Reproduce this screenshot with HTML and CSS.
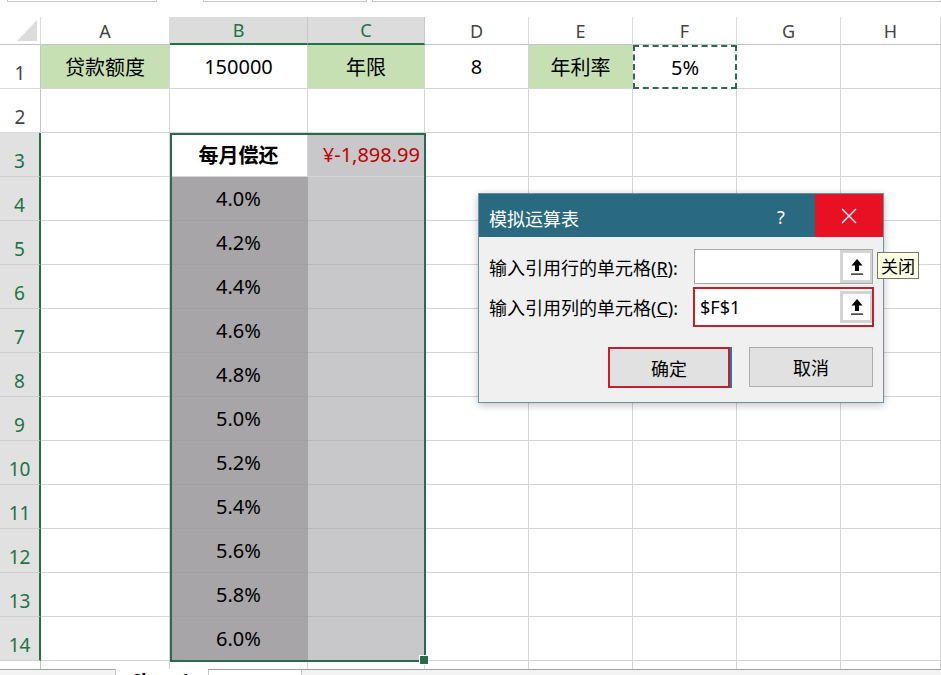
FILE: index.html
```html
<!DOCTYPE html>
<html lang="zh-CN">
<head>
    <meta charset="UTF-8">
    <title>模拟运算表</title>
    <link rel="stylesheet" href="styles.css">
</head>
<body>
<div class="page">
    <div class="topbar">
        <div class="fbox name"></div>
        <div class="fbox fx"></div>
        <div class="fbox formula"></div>
    </div>

    <div class="sheet">
        <!-- column headers -->
        <div class="ch corner"></div>
        <div class="ch">A</div>
        <div class="ch sel">B</div>
        <div class="ch sel">C</div>
        <div class="ch">D</div>
        <div class="ch">E</div>
        <div class="ch">F</div>
        <div class="ch">G</div>
        <div class="ch">H</div>

        <!-- row 1 -->
        <div class="rh">1</div>
        <div class="c fill">贷款额度</div>
        <div class="c">150000</div>
        <div class="c fill">年限</div>
        <div class="c">8</div>
        <div class="c fill">年利率</div>
        <div class="c ants">5%</div>
        <div class="c"></div>
        <div class="c"></div>

        <!-- row 2 -->
        <div class="rh">2</div>
        <div class="c"></div><div class="c"></div><div class="c"></div><div class="c"></div>
        <div class="c"></div><div class="c"></div><div class="c"></div><div class="c"></div>

        <!-- row 3 -->
        <div class="rh sel">3</div>
        <div class="c"></div>
        <div class="c head">每月偿还</div>
        <div class="c neg">¥-1,898.99</div>
        <div class="c"></div><div class="c"></div><div class="c"></div><div class="c"></div><div class="c"></div>

        <div class="rh sel">4</div>
        <div class="c"></div><div class="c pct">4.0%</div><div class="c shade"></div>
        <div class="c"></div><div class="c"></div><div class="c"></div><div class="c"></div><div class="c"></div>

        <div class="rh sel">5</div>
        <div class="c"></div><div class="c pct">4.2%</div><div class="c shade"></div>
        <div class="c"></div><div class="c"></div><div class="c"></div><div class="c"></div><div class="c"></div>

        <div class="rh sel">6</div>
        <div class="c"></div><div class="c pct">4.4%</div><div class="c shade"></div>
        <div class="c"></div><div class="c"></div><div class="c"></div><div class="c"></div><div class="c"></div>

        <div class="rh sel">7</div>
        <div class="c"></div><div class="c pct">4.6%</div><div class="c shade"></div>
        <div class="c"></div><div class="c"></div><div class="c"></div><div class="c"></div><div class="c"></div>

        <div class="rh sel">8</div>
        <div class="c"></div><div class="c pct">4.8%</div><div class="c shade"></div>
        <div class="c"></div><div class="c"></div><div class="c"></div><div class="c"></div><div class="c"></div>

        <div class="rh sel">9</div>
        <div class="c"></div><div class="c pct">5.0%</div><div class="c shade"></div>
        <div class="c"></div><div class="c"></div><div class="c"></div><div class="c"></div><div class="c"></div>

        <div class="rh sel">10</div>
        <div class="c"></div><div class="c pct">5.2%</div><div class="c shade"></div>
        <div class="c"></div><div class="c"></div><div class="c"></div><div class="c"></div><div class="c"></div>

        <div class="rh sel">11</div>
        <div class="c"></div><div class="c pct">5.4%</div><div class="c shade"></div>
        <div class="c"></div><div class="c"></div><div class="c"></div><div class="c"></div><div class="c"></div>

        <div class="rh sel">12</div>
        <div class="c"></div><div class="c pct">5.6%</div><div class="c shade"></div>
        <div class="c"></div><div class="c"></div><div class="c"></div><div class="c"></div><div class="c"></div>

        <div class="rh sel">13</div>
        <div class="c"></div><div class="c pct">5.8%</div><div class="c shade"></div>
        <div class="c"></div><div class="c"></div><div class="c"></div><div class="c"></div><div class="c"></div>

        <div class="rh sel">14</div>
        <div class="c"></div><div class="c pct">6.0%</div><div class="c shade"></div>
        <div class="c"></div><div class="c"></div><div class="c"></div><div class="c"></div><div class="c"></div>

        <!-- row 15, cut off -->
        <div class="rh cut"></div>
        <div class="c cut"></div><div class="c cut"></div><div class="c cut"></div><div class="c cut"></div>
        <div class="c cut"></div><div class="c cut"></div><div class="c cut"></div><div class="c cut"></div>

        <!-- selection B3:C14 -->
        <div class="range"></div>
    </div>

    <div class="tabs">
        <div class="tab-nav"></div>
        <div class="tab active">Sheet1</div>
        <div class="tab">Sheet2</div>
        <div class="tab-rest"></div>
    </div>

    <!-- data table dialog -->
    <div class="dialog">
        <div class="dlg-title">
            <span class="dlg-name">模拟运算表</span>
            <span class="dlg-help">?</span>
            <span class="dlg-close">
                <svg width="16" height="16" viewBox="0 0 16 16">
                    <path d="M1 1 L15 15 M15 1 L1 15" stroke="#fff" stroke-width="1.4" fill="none"/>
                </svg>
            </span>
        </div>
        <div class="dlg-body">
            <div class="dlg-row">
                <span class="dlg-label">输入引用行的单元格(<u>R</u>):</span>
                <div class="field">
                    <span class="field-val"></span>
                    <span class="pick">
                        <svg width="14" height="18" viewBox="0 0 14 18">
                            <path d="M7 1 L1.5 7.5 L5 7.5 L5 13 L9 13 L9 7.5 L12.5 7.5 Z" fill="#000"/>
                            <rect x="1" y="15.5" width="12" height="1.2" fill="#000"/>
                        </svg>
                    </span>
                </div>
            </div>
            <div class="dlg-row row-col">
                <span class="dlg-label">输入引用列的单元格(<u>C</u>):</span>
                <div class="field picked">
                    <span class="field-val">$F$1</span>
                    <span class="pick">
                        <svg width="14" height="18" viewBox="0 0 14 18">
                            <path d="M7 1 L1.5 7.5 L5 7.5 L5 13 L9 13 L9 7.5 L12.5 7.5 Z" fill="#000"/>
                            <rect x="1" y="15.5" width="12" height="1.2" fill="#000"/>
                        </svg>
                    </span>
                </div>
            </div>
            <div class="dlg-buttons">
                <button class="btn primary">确定</button>
                <button class="btn">取消</button>
            </div>
        </div>
    </div>

    <div class="tip">关闭</div>
</div>
</body>
</html>
```

FILE: styles.css
```css
* {
    box-sizing: border-box;
}

body {
    margin: 0;
    background: #fff;
    font-family: "Noto Sans", "Noto Sans CJK SC", sans-serif;
    overflow: hidden;
}

.page {
    position: relative;
    width: 941px;
    height: 675px;
    overflow: hidden;
}

/* formula bar edges peeking at the top */
.topbar {
    height: 17px;
    display: flex;
}

.fbox {
    height: 2px;
    border: 1px solid #c6c6c6;
    border-top: none;
}

.fbox.name { margin-left: 7px; width: 150px; }
.fbox.fx { margin-left: 46px; width: 164px; }
.fbox.formula { margin-left: 5px; flex: 1; }

/* worksheet grid */
.sheet {
    position: relative;
    display: grid;
    grid-template-columns: 41px 129px 138px 117px 104px 104px 104px 104px 1fr;
    grid-template-rows: 28px repeat(14, 44px) 8px;
}

.ch, .rh, .c {
    display: flex;
    align-items: center;
    justify-content: center;
    border-right: 1px solid #d4d4d4;
    border-bottom: 1px solid #d4d4d4;
}

.c {
    font-size: 20px;
    color: #000;
}

.ch {
    font-size: 18px;
    color: #444;
    background: #fff;
    border-right-color: #dadada;
    border-bottom-color: #c4c4c4;
}

.ch.sel {
    background: #dcdcdc;
    color: #217346;
    border-right-color: #c8c8c8;
    border-bottom: 2px solid #217346;
}

.corner {
    position: relative;
}

.corner::after {
    content: "";
    position: absolute;
    left: 17px;
    top: 3px;
    width: 20px;
    height: 21px;
    background: #dcdcdc;
    clip-path: polygon(100% 0, 100% 100%, 0 100%);
}

.rh {
    font-size: 19px;
    color: #444;
    background: #fff;
    align-items: flex-end;
    padding-bottom: 2px;
    border-right-color: #c4c4c4;
    border-bottom-color: #dadada;
}

.rh.sel {
    background: #e1e1e1;
    color: #217346;
    border-right: 2px solid #217346;
    border-bottom-color: #cdcdcd;
}

.rh.cut, .c.cut {
    border-bottom: none;
}

.fill {
    background: #c6e0b4;
}

.ants {
    border: 2px dashed #2b6a4e;
}

.head {
    font-weight: bold;
}

.neg {
    background: #c8c7c9;
    color: #c00000;
    justify-content: flex-end;
    padding-right: 4px;
}

.pct {
    background: #a7a5a7;
    border-right-color: #a7a5a7;
    border-bottom-color: #a2a0a2;
}

.shade {
    background: #c8c7c9;
    border-bottom-color: #b8b7b9;
}

.range {
    position: absolute;
    grid-column: 3 / 5;
    grid-row: 4 / 16;
    top: 0;
    left: 0;
    right: -1px;
    bottom: -1px;
    border: 2px solid #2b6a4e;
    pointer-events: none;
}

.range::after {
    content: "";
    position: absolute;
    right: -5px;
    bottom: -5px;
    width: 8px;
    height: 8px;
    background: #2b6a4e;
    border: 1px solid #fff;
}

/* sheet tabs, mostly cut off */
.tabs {
    display: flex;
    height: 30px;
    border-top: 1px solid #9e9e9e;
    background: #f3f3f3;
    font-size: 17px;
    line-height: 20px;
}

.tab-nav {
    width: 115px;
}

.tab {
    width: 93px;
    padding: 2px 0 0 16px;
    border-left: 1px solid #c6c6c6;
    background: #fff;
    color: #222;
}

.tab.active {
    margin-top: -1px;
    font-weight: bold;
    color: #000;
}

.tab-rest {
    flex: 1;
    border-left: 1px solid #c6c6c6;
}

/* dialog */
.dialog {
    position: absolute;
    left: 478px;
    top: 193px;
    width: 406px;
    height: 210px;
    background: #f0f0f0;
    border: 1px solid #6d8f9f;
    box-shadow: 0 2px 8px rgba(0, 0, 0, 0.25);
    font-size: 18px;
    color: #000;
}

.dlg-title {
    height: 43px;
    background: #2a6a80;
    color: #fff;
    display: flex;
    align-items: center;
}

.dlg-name {
    flex: 1;
    padding: 4px 0 0 10px;
}

.dlg-help {
    width: 40px;
    text-align: center;
    margin-right: 14px;
    padding-top: 2px;
}

.dlg-close {
    width: 68px;
    height: 43px;
    background: #e81123;
    display: flex;
    align-items: center;
    justify-content: center;
}

.dlg-body {
    padding: 12px 10px 0 10px;
}

.dlg-row {
    display: flex;
    align-items: center;
    justify-content: space-between;
}

.row-col {
    margin-top: 3px;
}

.field {
    display: flex;
    width: 179px;
    height: 35px;
    background: #fff;
    border: 1px solid #a8a8a8;
}

.field.picked {
    width: 181px;
    height: 40px;
    margin-right: -1px;
    border: 2px solid #c4202c;
}

.field-val {
    flex: 1;
    display: flex;
    align-items: center;
    padding-left: 5px;
}

.pick {
    width: 32px;
    display: flex;
    align-items: center;
    justify-content: center;
    background: #fff;
    border: 3px solid #d4d4d4;
    border-right-width: 2px;
}

.picked .pick {
    margin: 2px 0;
}

.dlg-buttons {
    display: flex;
    justify-content: flex-end;
    gap: 19px;
    margin-top: 20px;
}

.btn {
    width: 124px;
    height: 40px;
    background: #e1e1e1;
    border: 1px solid #adadad;
    font-family: inherit;
    font-size: 18px;
    color: #000;
    padding: 0;
}

.btn.primary {
    width: 122px;
    height: 41px;
    border: 2px solid #c4202c;
    box-shadow: 2px 0 0 #2a72b8;
}

.tip {
    position: absolute;
    left: 877px;
    top: 252px;
    width: 42px;
    height: 27px;
    background: #ffffe1;
    border: 1px solid #767676;
    font-size: 17px;
    display: flex;
    align-items: center;
    justify-content: center;
}
```
